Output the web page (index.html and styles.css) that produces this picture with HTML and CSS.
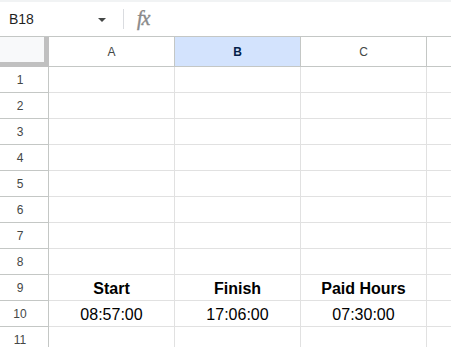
FILE: index.html
```html
<!DOCTYPE html>
<html>
<head>
  <title>Sheet</title>
  <meta charset="UTF-8">
  <link rel="stylesheet" href="styles.css">
</head>
<body>
  <div class="formula-bar">
    <span class="name-box">B18</span>
    <span class="name-arrow"></span>
    <span class="bar-divider"></span>
    <span class="fx">fx</span>
  </div>
  <div class="sheet">
    <div class="corner"></div>
    <div class="col-head">A</div>
    <div class="col-head selected">B</div>
    <div class="col-head">C</div>
    <div class="col-head last"></div>

    <div class="row-head">1</div><div class="cell"></div><div class="cell"></div><div class="cell"></div><div class="cell last"></div>
    <div class="row-head">2</div><div class="cell"></div><div class="cell"></div><div class="cell"></div><div class="cell last"></div>
    <div class="row-head">3</div><div class="cell"></div><div class="cell"></div><div class="cell"></div><div class="cell last"></div>
    <div class="row-head">4</div><div class="cell"></div><div class="cell"></div><div class="cell"></div><div class="cell last"></div>
    <div class="row-head">5</div><div class="cell"></div><div class="cell"></div><div class="cell"></div><div class="cell last"></div>
    <div class="row-head">6</div><div class="cell"></div><div class="cell"></div><div class="cell"></div><div class="cell last"></div>
    <div class="row-head">7</div><div class="cell"></div><div class="cell"></div><div class="cell"></div><div class="cell last"></div>
    <div class="row-head">8</div><div class="cell"></div><div class="cell"></div><div class="cell"></div><div class="cell last"></div>
    <div class="row-head">9</div><div class="cell bold">Start</div><div class="cell bold">Finish</div><div class="cell bold">Paid Hours</div><div class="cell last"></div>
    <div class="row-head">10</div><div class="cell">08:57:00</div><div class="cell">17:06:00</div><div class="cell">07:30:00</div><div class="cell last"></div>
    <div class="row-head">11</div><div class="cell"></div><div class="cell"></div><div class="cell"></div><div class="cell last"></div>
  </div>
</body>
</html>
```

FILE: styles.css
```css
body {
  margin: 0;
  font-family: "Liberation Sans", Arial, sans-serif;
  background-color: #ffffff;
  overflow: hidden;
}
.formula-bar {
  height: 34px;
  border-top: 2px solid #f1f3f4;
  display: flex;
  align-items: center;
  border-bottom: 1px solid #c4c7c5;
}
.name-box {
  font-size: 14px;
  color: #1f1f1f;
  margin-left: 9px;
  width: 89px;
}
.name-arrow {
  width: 0;
  height: 0;
  border-left: 4px solid transparent;
  border-right: 4px solid transparent;
  border-top: 4px solid #444746;
  margin-top: 1px;
}
.bar-divider {
  width: 1px;
  height: 20px;
  background-color: #dadce0;
  margin-left: 17px;
}
.fx {
  font-family: "Liberation Serif", serif;
  font-style: italic;
  font-size: 20px;
  color: #8a8a8a;
  margin-left: 13px;
  margin-top: -2px;
  letter-spacing: -1px;
  -webkit-text-stroke: 0.4px #8a8a8a;
}
.sheet {
  display: grid;
  grid-template-columns: 49px 126px 126px 126px 1fr;
  grid-template-rows: 30px repeat(11, 26px);
}
.corner {
  background-color: #f8f9fa;
  border-right: 5px solid #c0c0c0;
  border-bottom: 5px solid #c0c0c0;
}
.col-head {
  border-right: 1px solid #c4c7c5;
  border-bottom: 1px solid #c4c7c5;
  display: flex;
  align-items: center;
  justify-content: center;
  font-size: 12px;
  color: #444746;
  padding-top: 1px;
}
.col-head.selected {
  background-color: #d3e3fd;
  color: #041e49;
  font-weight: bold;
}
.col-head.last, .cell.last {
  border-right: none;
}
.row-head {
  border-right: 1px solid #c4c7c5;
  border-bottom: 1px solid #c4c7c5;
  display: flex;
  align-items: center;
  justify-content: center;
  font-size: 12px;
  color: #444746;
  padding-right: 8px;
}
.cell {
  border-right: 1px solid #e1e1e1;
  border-bottom: 1px solid #e1e1e1;
  display: flex;
  align-items: flex-end;
  justify-content: center;
  font-size: 16px;
  color: #000000;
  padding-bottom: 2px;
  line-height: 18px;
}
.cell.bold {
  font-weight: bold;
}
```
